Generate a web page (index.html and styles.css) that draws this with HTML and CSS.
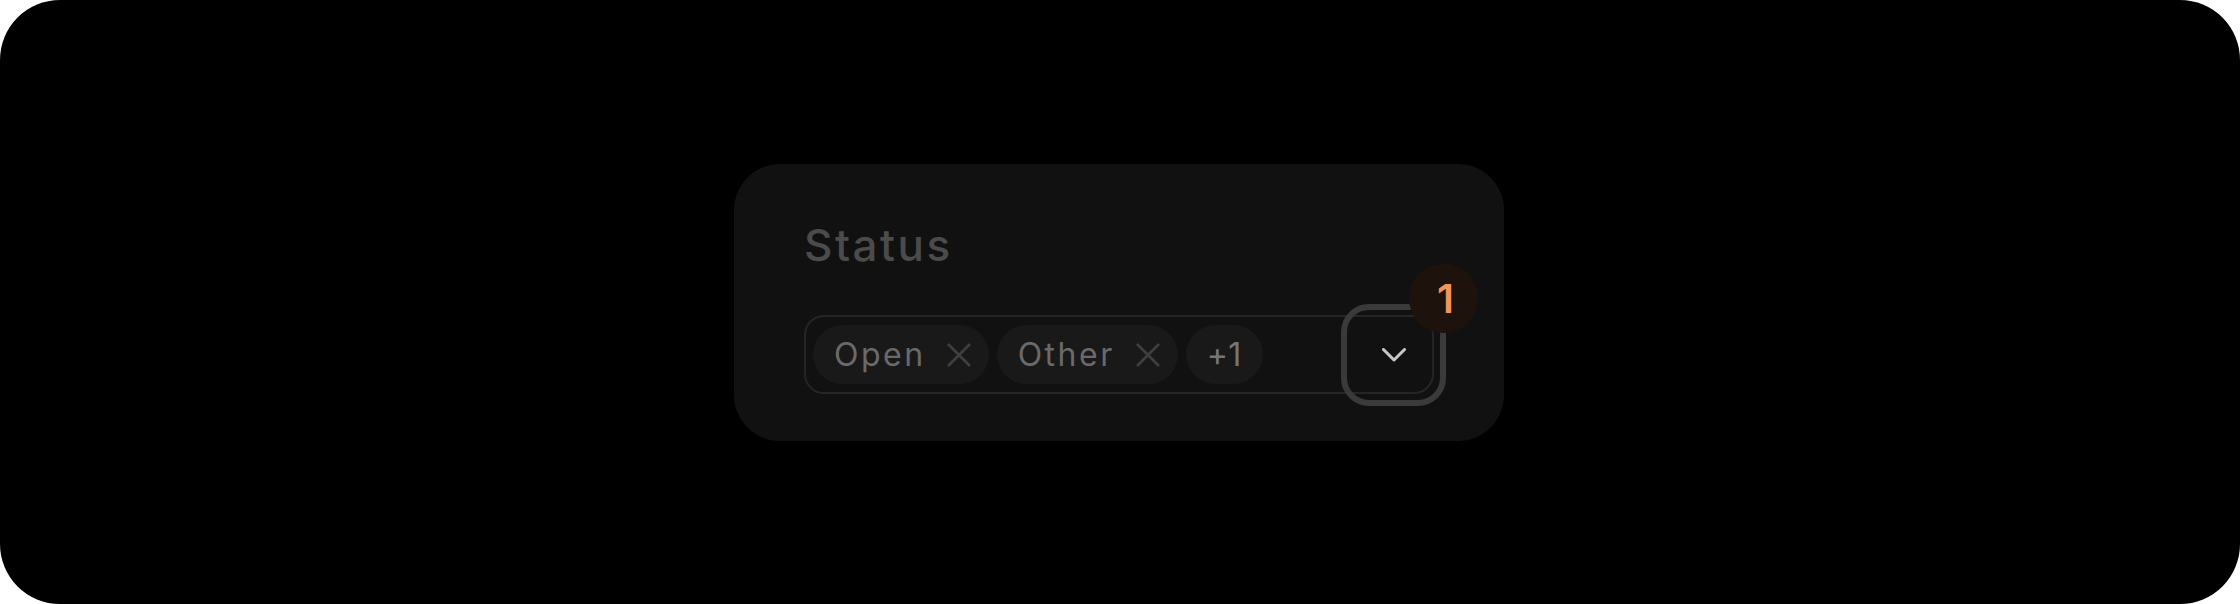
FILE: index.html
```html
<!DOCTYPE html>
<html lang="en">
<head>
<meta charset="utf-8">
<title>Status filter</title>
<link rel="stylesheet" href="styles.css">
</head>
<body>
<div class="frame">
  <section class="card">
    <div class="label">Status</div>
    <div class="select">
      <div class="tags">
        <span class="tag">
          <span class="tag-text">Open</span>
          <svg class="tag-x" viewBox="0 0 24 24" width="24" height="24"><path d="M1 1 L23 23 M23 1 L1 23" /></svg>
        </span>
        <span class="tag">
          <span class="tag-text">Other</span>
          <svg class="tag-x" viewBox="0 0 24 24" width="24" height="24"><path d="M1 1 L23 23 M23 1 L1 23" /></svg>
        </span>
        <span class="tag tag-more">+1</span>
      </div>
      <button class="toggle" type="button" aria-label="Open options">
        <svg class="chevron" viewBox="0 0 24 14" width="24" height="14"><polyline points="1.5,1.5 12,12 22.5,1.5" /></svg>
      </button>
      <span class="badge">1</span>
    </div>
  </section>
</div>
</body>
</html>
```

FILE: styles.css
```css
html, body {
  margin: 0;
  padding: 0;
  background: #ffffff;
}

.frame {
  width: 2240px;
  height: 604px;
  background: #000000;
  border-radius: 60px;
  display: flex;
  align-items: center;
  justify-content: center;
  font-family: Inter, "Open Sans", "Liberation Sans", sans-serif;
}

.card {
  width: 770px;
  box-sizing: border-box;
  margin-left: -2px;
  margin-top: 1px;
  background: #111111;
  border-radius: 46px;
  padding: 48px 70px 47px;
}

.label {
  color: #4b4b4b;
  font-size: 44px;
  font-weight: 500;
  line-height: 66px;
  letter-spacing: 2.5px;
  margin-bottom: 37px;
}

.select {
  position: relative;
  height: 79px;
  box-sizing: border-box;
  border: 2px solid #252525;
  border-radius: 20px;
  padding: 8px 7px;
  display: flex;
  align-items: center;
}

.tags {
  display: flex;
  gap: 8px;
}

.tag {
  display: inline-flex;
  align-items: center;
  gap: 21px;
  height: 59px;
  padding: 0 18px 0 21px;
  background: #191919;
  border-radius: 30px;
  color: #6a6a6a;
  font-size: 32px;
  line-height: 59px;
}

.tag-text {
  letter-spacing: 2.5px;
}

.tag-x {
  display: block;
  flex: none;
}

.tag-x path {
  stroke: #3f3f3f;
  stroke-width: 2.6;
  fill: none;
}

.tag-more {
  padding: 0 21px;
  letter-spacing: 0.5px;
  color: #767676;
}

.toggle {
  position: absolute;
  top: -13px;
  right: -14px;
  width: 105px;
  height: 102px;
  box-sizing: border-box;
  border: 6px solid #3a3a3a;
  border-radius: 28px;
  background: transparent;
  padding: 0;
  display: flex;
  align-items: center;
  justify-content: center;
}

.chevron {
  display: block;
}

.chevron polyline {
  fill: none;
  stroke: #c8c8c8;
  stroke-width: 3;
  stroke-linecap: round;
  stroke-linejoin: round;
}

.badge {
  position: absolute;
  top: -53px;
  right: -46px;
  width: 69px;
  height: 69px;
  border-radius: 50%;
  background: #1e130c;
  color: #f4945a;
  font-size: 40px;
  font-weight: 600;
  line-height: 69px;
  text-align: center;
  padding-left: 4px;
  box-sizing: border-box;
}
```
